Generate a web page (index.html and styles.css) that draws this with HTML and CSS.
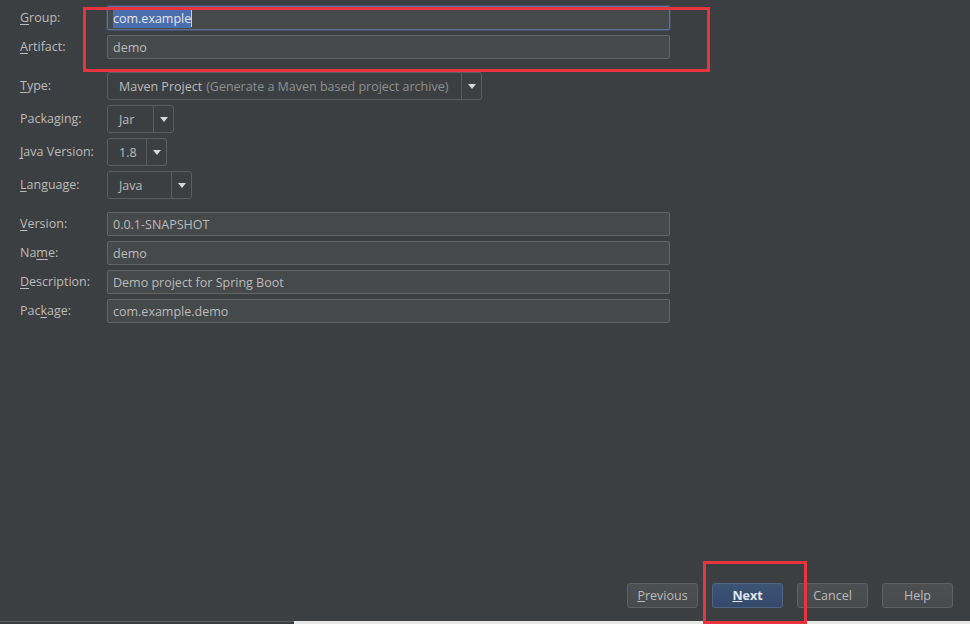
FILE: index.html
```html
<!DOCTYPE html>
<html>
<head>
<meta charset="utf-8">
<link rel="stylesheet" href="styles.css">
</head>
<body>
<div class="dialog">
  <div class="form">
    <div class="group group-coords">
      <label class="lbl"><u>G</u>roup:</label>
      <div class="field focused"><span class="sel">com.example</span><span class="caret"></span></div>
      <label class="lbl"><u>A</u>rtifact:</label>
      <div class="field">demo</div>
    </div>
    <div class="group group-combos">
      <label class="lbl"><u>T</u>ype:</label>
      <div class="combo combo-type"><span class="combo-text">Maven Project <span class="dim">(Generate a Maven based project archive)</span></span><span class="arrow"></span></div>
      <label class="lbl">Packaging:</label>
      <div class="combo combo-pack"><span class="combo-text">Jar</span><span class="arrow"></span></div>
      <label class="lbl"><u>J</u>ava Version:</label>
      <div class="combo combo-java"><span class="combo-text">1.8</span><span class="arrow"></span></div>
      <label class="lbl"><u>L</u>anguage:</label>
      <div class="combo combo-lang"><span class="combo-text">Java</span><span class="arrow"></span></div>
    </div>
    <div class="group group-meta">
      <label class="lbl"><u>V</u>ersion:</label>
      <div class="field">0.0.1-SNAPSHOT</div>
      <label class="lbl">Na<u>m</u>e:</label>
      <div class="field">demo</div>
      <label class="lbl"><u>D</u>escription:</label>
      <div class="field">Demo project for Spring Boot</div>
      <label class="lbl">Pac<u>k</u>age:</label>
      <div class="field">com.example.demo</div>
    </div>
  </div>
  <div class="buttons">
    <button class="btn"><u>P</u>revious</button>
    <button class="btn btn-default"><u>N</u>ext</button>
    <button class="btn">Cancel</button>
    <button class="btn">Help</button>
  </div>
  <div class="bottom-strip">
    <div class="strip-left"></div>
    <div class="strip-right"></div>
  </div>
  <div class="mark mark-coords"></div>
  <div class="mark mark-next"></div>
</div>
</body>
</html>
```
FILE: styles.css
```css
html, body {
  margin: 0;
  padding: 0;
}
body {
  background: #3c3f41;
  font-family: "Open Sans", "Noto Sans", sans-serif;
  font-size: 12.5px;
  color: #bbbbbb;
}
.dialog {
  position: relative;
  width: 970px;
  height: 624px;
  overflow: hidden;
  display: flex;
  flex-direction: column;
}
.form {
  padding: 6px 0 0 20px;
}
.group {
  display: grid;
  grid-template-columns: 87px auto;
  justify-items: start;
  align-items: center;
  row-gap: 5px;
}
.group-combos {
  margin-top: 13px;
}
.group-meta {
  margin-top: 13px;
}
.lbl {
  color: #bbbbbb;
  line-height: 16px;
}
.lbl u {
  text-decoration-thickness: 1px;
  text-underline-offset: 2px;
}
.field {
  box-sizing: border-box;
  width: 563px;
  height: 24px;
  background: #45494a;
  border: 1px solid #646464;
  border-radius: 2px;
  padding: 0 5px;
  display: flex;
  align-items: center;
  color: #bbbbbb;
}
.field.focused {
  border-color: #5f7293;
  box-shadow: 0 0 0 1px #46506a;
}
.sel {
  background: #4b6eaf;
  color: #e6e6e6;
  line-height: 19px;
}
.caret {
  display: inline-block;
  width: 1px;
  height: 17px;
  background: #d0d0d0;
}
.combo {
  box-sizing: border-box;
  height: 28px;
  border: 1px solid #5b5e60;
  border-radius: 3px;
  background: #3c3f41;
  display: flex;
  align-items: stretch;
}
.combo-text {
  flex: 1;
  display: flex;
  align-items: center;
  padding-left: 11px;
  color: #bbbbbb;
  white-space: nowrap;
}
.dim {
  color: #8f8f8f;
  margin-left: 4px;
}
.arrow {
  width: 19px;
  border-left: 1px solid #5b5e60;
  display: flex;
  align-items: center;
  justify-content: center;
}
.arrow::before {
  content: "";
  width: 0;
  height: 0;
  border-left: 4px solid transparent;
  border-right: 4px solid transparent;
  border-top: 5px solid #d8d8d8;
}
.combo-type { width: 375px; }
.combo-pack { width: 67px; }
.combo-java { width: 60px; }
.combo-lang { width: 85px; }

.buttons {
  margin-top: auto;
  display: flex;
  justify-content: flex-end;
  gap: 14px;
  padding: 0 17px 13px 0;
}
.btn {
  box-sizing: border-box;
  width: 71px;
  height: 25px;
  font-family: inherit;
  font-size: 12.5px;
  color: #bbbbbb;
  background: linear-gradient(#4b4f51, #474b4d);
  border: 1px solid #5e6162;
  border-radius: 3px;
  padding: 0;
}
.btn-default {
  background: linear-gradient(#3d5475, #34486a);
  border-color: #4f6485;
  color: #e2e6ea;
  font-weight: bold;
}
.bottom-strip {
  height: 3px;
  display: flex;
}
.strip-left {
  width: 294px;
  border-top: 1px solid #5f6264;
  background: #3a3d3f;
}
.strip-right {
  flex: 1;
  background: #e6e6e6;
}
.mark {
  position: absolute;
  box-sizing: border-box;
  border: 3px solid #e8343e;
}
.mark-coords {
  left: 83px;
  top: 7px;
  width: 627px;
  height: 65px;
}
.mark-next {
  left: 703px;
  top: 561px;
  width: 104px;
  height: 63px;
}
```
